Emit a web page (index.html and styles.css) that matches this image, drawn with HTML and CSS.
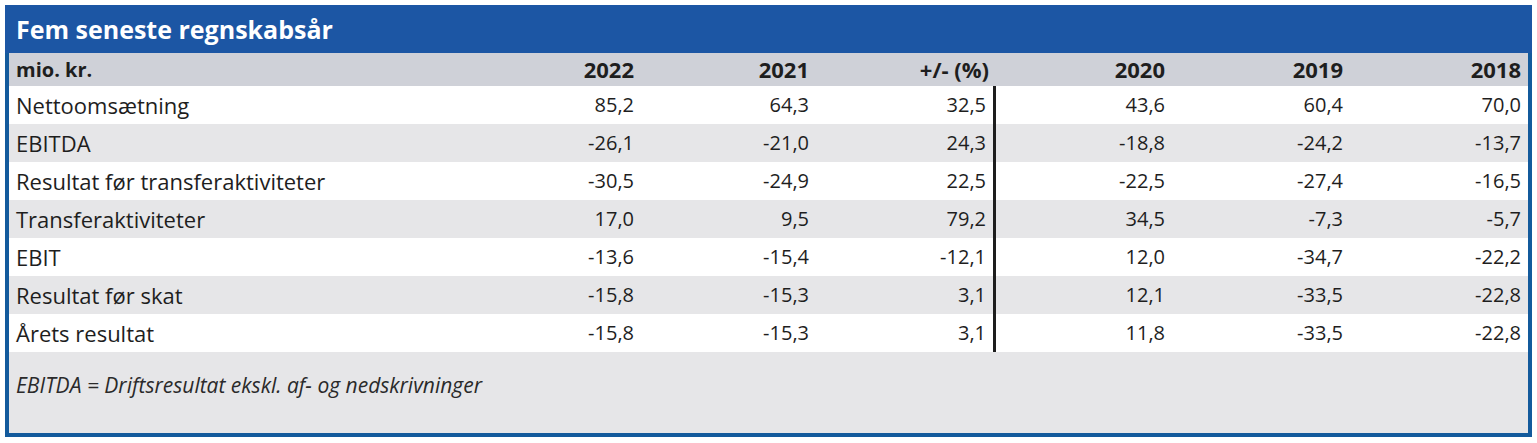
FILE: index.html
```html
<!DOCTYPE html>
<html lang="da">
<head>
<meta charset="utf-8">
<title>Fem seneste regnskabsår</title>
<link rel="stylesheet" href="styles.css">
</head>
<body>
<div class="panel">
  <div class="title">Fem seneste regnskabsår</div>
  <div class="table">
    <div class="row head">
      <div class="c lbl">mio. kr.</div>
      <div class="c">2022</div>
      <div class="c">2021</div>
      <div class="c">+/- (%)</div>
      <div class="c">2020</div>
      <div class="c">2019</div>
      <div class="c">2018</div>
    </div>
    <div class="row">
      <div class="c lbl">Nettoomsætning</div>
      <div class="c">85,2</div><div class="c">64,3</div><div class="c sep">32,5</div>
      <div class="c">43,6</div><div class="c">60,4</div><div class="c">70,0</div>
    </div>
    <div class="row alt">
      <div class="c lbl">EBITDA</div>
      <div class="c">-26,1</div><div class="c">-21,0</div><div class="c sep">24,3</div>
      <div class="c">-18,8</div><div class="c">-24,2</div><div class="c">-13,7</div>
    </div>
    <div class="row">
      <div class="c lbl">Resultat før transferaktiviteter</div>
      <div class="c">-30,5</div><div class="c">-24,9</div><div class="c sep">22,5</div>
      <div class="c">-22,5</div><div class="c">-27,4</div><div class="c">-16,5</div>
    </div>
    <div class="row alt">
      <div class="c lbl">Transferaktiviteter</div>
      <div class="c">17,0</div><div class="c">9,5</div><div class="c sep">79,2</div>
      <div class="c">34,5</div><div class="c">-7,3</div><div class="c">-5,7</div>
    </div>
    <div class="row">
      <div class="c lbl">EBIT</div>
      <div class="c">-13,6</div><div class="c">-15,4</div><div class="c sep">-12,1</div>
      <div class="c">12,0</div><div class="c">-34,7</div><div class="c">-22,2</div>
    </div>
    <div class="row alt">
      <div class="c lbl">Resultat før skat</div>
      <div class="c">-15,8</div><div class="c">-15,3</div><div class="c sep">3,1</div>
      <div class="c">12,1</div><div class="c">-33,5</div><div class="c">-22,8</div>
    </div>
    <div class="row">
      <div class="c lbl">Årets resultat</div>
      <div class="c">-15,8</div><div class="c">-15,3</div><div class="c sep">3,1</div>
      <div class="c">11,8</div><div class="c">-33,5</div><div class="c">-22,8</div>
    </div>
  </div>
  <div class="note">EBITDA = Driftsresultat ekskl. af- og nedskrivninger</div>
</div>
</body>
</html>
```
FILE: styles.css
```css
html, body {
  margin: 0;
  padding: 0;
  background: #ffffff;
}
body {
  padding: 5px 0 0 5px;
  font-family: "Open Sans", "Noto Sans", "DejaVu Sans", sans-serif;
  color: #1e1e1e;
}
.panel {
  width: 1519px;
  border: 4px solid #135a9c;
  border-top: 0;
  background: #e6e6e8;
}
.title {
  height: 48px;
  box-sizing: border-box;
  padding: 4px 0 0 11px;
  margin: 0 -4px;
  background: #1c56a4;
  color: #ffffff;
  font-weight: 700;
  font-size: 25px;
  line-height: 40px;
  white-space: nowrap;
}
.table {
  display: flex;
  flex-direction: column;
}
.row {
  display: grid;
  grid-template-columns: 457px 175px 175px 180px 176px 178px 178px;
  height: 38px;
  background: #ffffff;
  font-size: 20px;
  align-items: center;
}
.row.alt {
  background: #e6e6e8;
}
.row.head {
  height: 33px;
  background: #cfd1d8;
  font-weight: 700;
  font-size: 22px;
}
.c {
  text-align: right;
  padding-right: 7px;
  line-height: 38px;
  white-space: nowrap;
}
.head .c {
  line-height: 33px;
}
.c.lbl {
  text-align: left;
  padding-left: 7px;
  font-size: 22px;
}
.head .c.lbl {
  font-size: 20px;
}
.c.sep {
  border-right: 3px solid #1e1e1e;
}
.note {
  height: 81px;
  box-sizing: border-box;
  padding: 19px 0 0 7px;
  font-style: italic;
  font-size: 21px;
  color: #2a2a2a;
  white-space: nowrap;
}
```
